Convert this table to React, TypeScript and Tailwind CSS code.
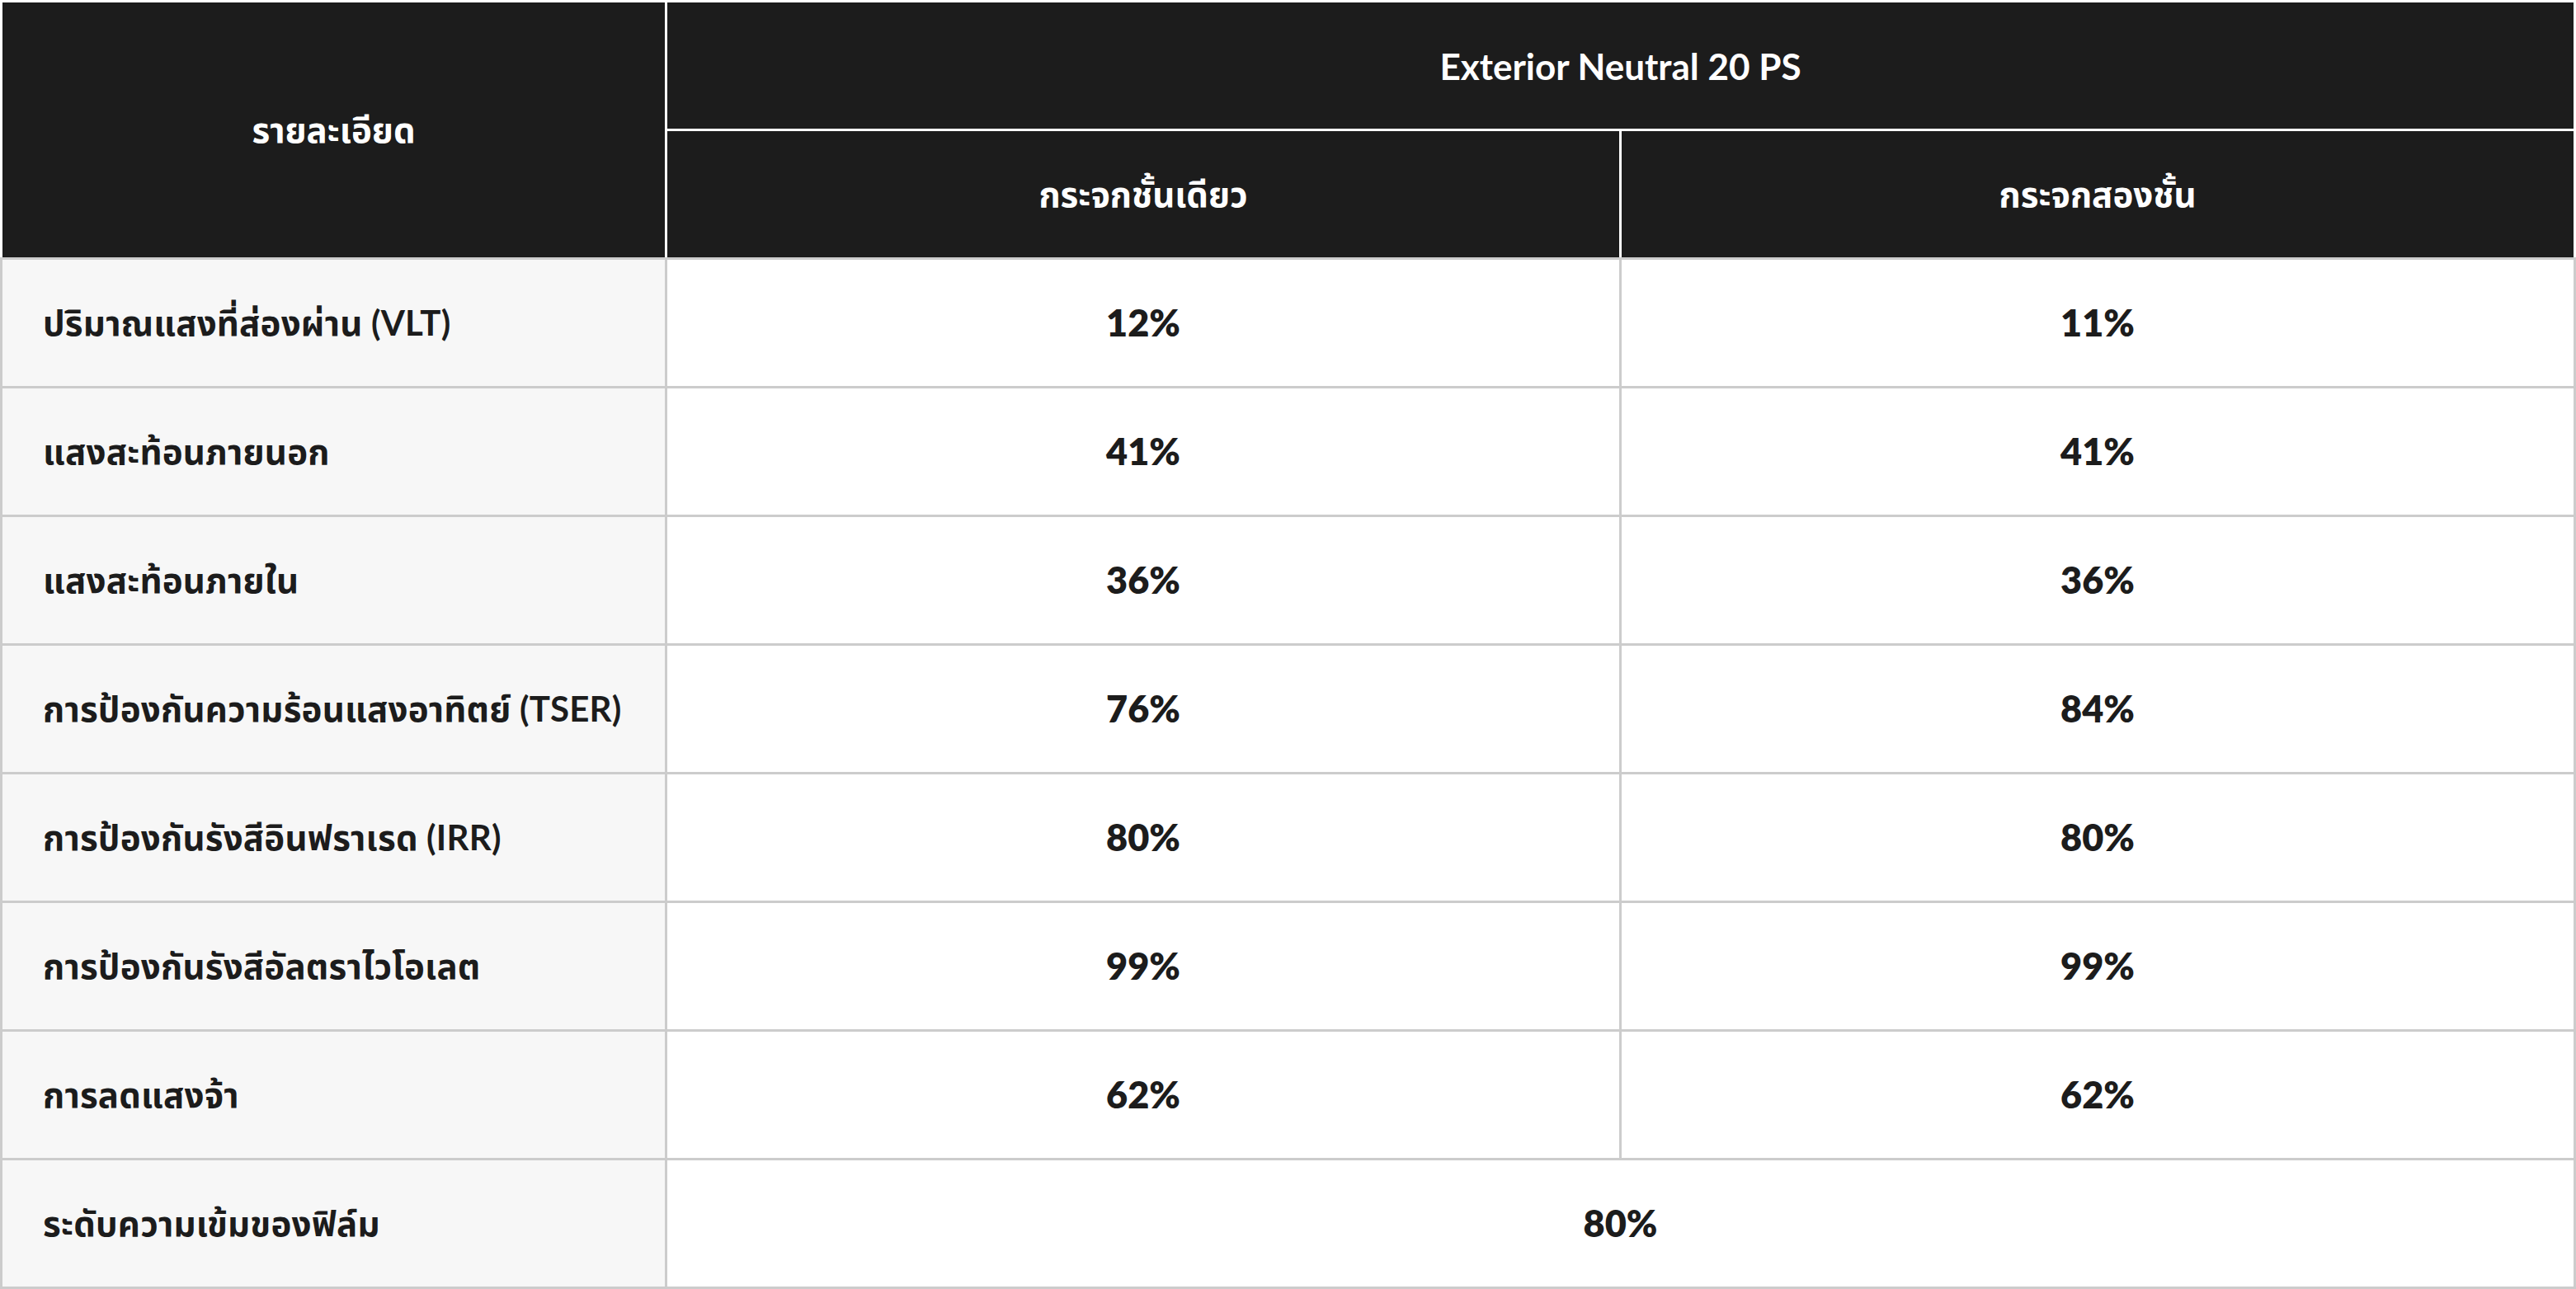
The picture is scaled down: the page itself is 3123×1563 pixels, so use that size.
const rows: { label: string; single: string; double?: string }[] = [
  { label: "ปริมาณแสงที่ส่องผ่าน (VLT)", single: "12%", double: "11%" },
  { label: "แสงสะท้อนภายนอก", single: "41%", double: "41%" },
  { label: "แสงสะท้อนภายใน", single: "36%", double: "36%" },
  { label: "การป้องกันความร้อนแสงอาทิตย์ (TSER)", single: "76%", double: "84%" },
  { label: "การป้องกันรังสีอินฟราเรด (IRR)", single: "80%", double: "80%" },
  { label: "การป้องกันรังสีอัลตราไวโอเลต", single: "99%", double: "99%" },
  { label: "การลดแสงจ้า", single: "62%", double: "62%" },
  { label: "ระดับความเข้มของฟิล์ม", single: "80%" },
];

const App = () => {
  return (
    <div className="min-h-screen bg-white font-['Lato','Noto_Sans_Thai','Noto_Sans',sans-serif] text-[#1c1c1c]">
      <table className="w-full table-fixed border-collapse">
        <colgroup>
          <col className="w-[806px]" />
          <col />
          <col />
        </colgroup>
        <thead>
          <tr className="h-[156px]">
            <th
              rowSpan={2}
              className="border-[3px] border-white border-b-[#cccccc] bg-[#1c1c1c] text-[42px] font-bold text-white"
            >
              รายละเอียด
            </th>
            <th
              colSpan={2}
              className="border-[3px] border-white bg-[#1c1c1c] text-[44px] font-bold text-white"
            >
              Exterior Neutral 20 PS
            </th>
          </tr>
          <tr className="h-[156px]">
            <th className="border-[3px] border-white border-b-[#cccccc] bg-[#1c1c1c] text-[42px] font-bold text-white">
              กระจกชั้นเดียว
            </th>
            <th className="border-[3px] border-white border-b-[#cccccc] bg-[#1c1c1c] text-[42px] font-bold text-white">
              กระจกสองชั้น
            </th>
          </tr>
        </thead>
        <tbody>
          {rows.map((row) => (
            <tr key={row.label} className="h-[156px]">
              <td className="border-[3px] border-[#cccccc] bg-[#f7f7f7] pl-[49px] text-left text-[42px] font-bold tracking-[0.2px]">
                {row.label}
              </td>
              {row.double === undefined ? (
                <td colSpan={2} className="border-[3px] border-[#cccccc] bg-white text-center text-[45px] font-extrabold">
                  {row.single}
                </td>
              ) : (
                <>
                  <td className="border-[3px] border-[#cccccc] bg-white text-center text-[45px] font-extrabold">
                    {row.single}
                  </td>
                  <td className="border-[3px] border-[#cccccc] bg-white text-center text-[45px] font-extrabold">
                    {row.double}
                  </td>
                </>
              )}
            </tr>
          ))}
        </tbody>
      </table>
    </div>
  );
};

export default App;
